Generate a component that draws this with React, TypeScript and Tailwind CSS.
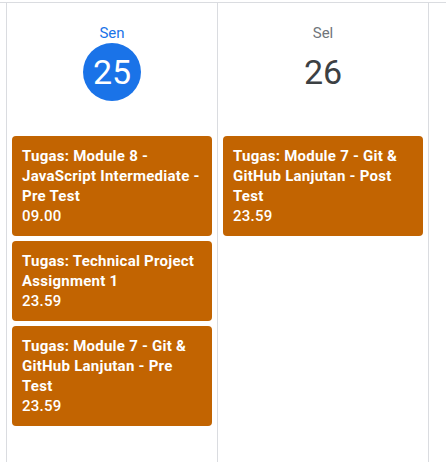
const days = [
  {
    label: 'Sen',
    date: '25',
    today: true,
    events: [
      { title: 'Tugas: Module 8 - JavaScript Intermediate - Pre Test', time: '09.00' },
      { title: 'Tugas: Technical Project Assignment 1', time: '23.59' },
      { title: 'Tugas: Module 7 - Git & GitHub Lanjutan - Pre Test', time: '23.59' },
    ],
  },
  {
    label: 'Sel',
    date: '26',
    today: false,
    events: [{ title: 'Tugas: Module 7 - Git & GitHub Lanjutan - Post Test', time: '23.59' }],
  },
];

export default function App() {
  return (
    <div className="w-[446px] h-[462px] bg-white overflow-hidden font-['Roboto','Liberation_Sans',sans-serif]">
      <div className="h-[2px]" />
      <div className="flex h-[460px] border-t border-[#dadce0]">
        <div className="w-[7px] border-r border-[#dadce0] shrink-0" />
        {days.map((d) => (
          <div key={d.date} className="w-[211px] shrink-0 border-r border-[#dadce0] flex flex-col">
            <div className="flex flex-col items-center pt-[20px] h-[133px]">
              <span className={`text-[15px] leading-[20px] ${d.today ? 'text-[#1a73e8]' : 'text-[#70757a]'}`}>
                {d.label}
              </span>
              <div
                className={`w-[58px] h-[58px] rounded-full flex items-center justify-center text-[34px] ${
                  d.today ? 'bg-[#1a73e8] text-white' : 'text-[#3c4043]'
                }`}
              >
                {d.date}
              </div>
            </div>
            <div className="flex flex-col gap-[5px] px-[5px]">
              {d.events.map((e, i) => (
                <div
                  key={i}
                  className="bg-[#c26401] rounded-[4px] px-[10px] py-[10px] text-white text-[15px] leading-[20px] tracking-[0.25px]"
                >
                  <div className="font-bold">{e.title}</div>
                  <div className="font-medium">{e.time}</div>
                </div>
              ))}
            </div>
          </div>
        ))}
      </div>
    </div>
  );
}
